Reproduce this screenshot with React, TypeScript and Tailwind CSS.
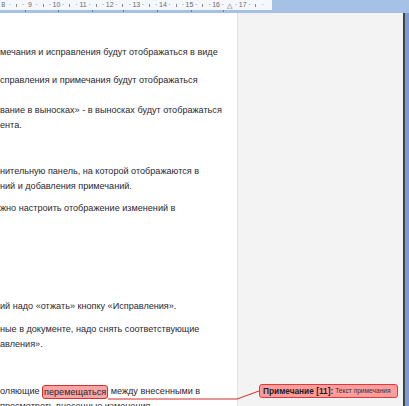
const lines = [
  { text: "мечания и исправления будут отображаться в виде", cls: "mt-[32px]" },
  { text: "справления и примечания будут отображаться", cls: "mt-[13px]" },
  { text: "вание в выносках» - в выносках будут отображаться", cls: "mt-[15px]" },
  { text: "ента.", cls: "" },
  { text: "нительную панель, на которой отображаются в", cls: "mt-[31px]" },
  { text: "ний и добавления примечаний.", cls: "" },
  { text: "жно настроить отображение изменений в", cls: "mt-[7px]" },
  { text: "ий надо «отжать» кнопку «Исправления».", cls: "mt-[83px]" },
  { text: "ные в документе, надо снять соответствующие", cls: "mt-[8px]" },
  { text: "авления».", cls: "" },
];

const ruler = ["8", "9", "10", "11", "12", "13", "14", "15", "16", "17"];

export default function App() {
  return (
    <div className="w-[409px] h-[406px] overflow-hidden bg-[#a6c1e6] flex flex-col font-['Liberation_Sans',sans-serif]">
      {/* RULER */}
      <div className="h-[13px] shrink-0 relative">
        <div className="w-[272px] h-[10px] bg-[#f4f7fc] flex text-[7px] leading-[10px] text-[#6b6b6b]">
          {ruler.map((n, i) => (
            <div key={n} className="w-[26.6px] shrink-0 grid grid-cols-4 items-center justify-items-center">
              {i === 8 ? (
                <>
                  <span>{n}</span>
                  <span>·</span>
                  <span className="relative top-[1px] text-[#555]">△</span>
                  <span>·</span>
                </>
              ) : (
                <>
                  <span>{n}</span>
                  <span>·</span>
                  <span className="w-px h-[3px] bg-[#8a8a8a]"></span>
                  <span>·</span>
                </>
              )}
            </div>
          ))}
        </div>
        <div className="absolute left-0 top-[10px] h-[3px] w-[272px]">
          {[25, 58, 92, 123, 157, 191, 223].map((x) => (
            <span key={x} className="absolute top-0 w-px h-[2px] bg-[#6b7f9c]" style={{ left: x }}></span>
          ))}
        </div>
      </div>

      {/* PAGE */}
      <div className="relative flex flex-1 min-h-0">
        <div className="w-[237px] shrink-0 bg-white overflow-hidden flex flex-col whitespace-nowrap text-[9.1px] leading-[15px] text-[#2b2830]">
          {lines.map((l) => (
            <div key={l.text} className={"h-[15px] shrink-0 " + l.cls}>
              {l.text}
            </div>
          ))}
          <div className="h-[15px] shrink-0 mt-[32px] flex items-center">
            <span>оляющие&nbsp;</span>
            <span className="inline-block h-[14px] leading-[12px] bg-[#f7a4a4] border border-[#d93030] rounded-[3px] px-[1px]">
              перемещаться
            </span>
            <span>&nbsp;между внесенными в</span>
          </div>
          <div className="h-[15px] shrink-0">просмотреть внесенные изменения</div>
        </div>

        <div className="flex-1 bg-[#f3f3f3] border-l border-[#e2e2e2] flex flex-col">
          <div className="mt-[371px] ml-[21px] w-[139px] h-[14px] bg-[#ff9c9c] border border-[#e03a3a] rounded-[3px] flex items-center px-[3px] whitespace-nowrap">
            <span className="text-[8.3px] font-bold text-[#1e1e1e]">Примечание [11]:</span>
            <span className="ml-[2px] text-[6.6px] text-[#333]">Текст примечания</span>
          </div>
        </div>

        <div className="w-[2px] bg-[#3b4350]"></div>
        <div className="w-[4px] bg-[#7d9cd2]"></div>

        <svg className="absolute left-0 top-0 pointer-events-none" width="409" height="393">
          <polyline points="108,386 237,386 259,378" fill="none" stroke="#d42a2a" strokeWidth="1" />
        </svg>
      </div>
    </div>
  );
}
